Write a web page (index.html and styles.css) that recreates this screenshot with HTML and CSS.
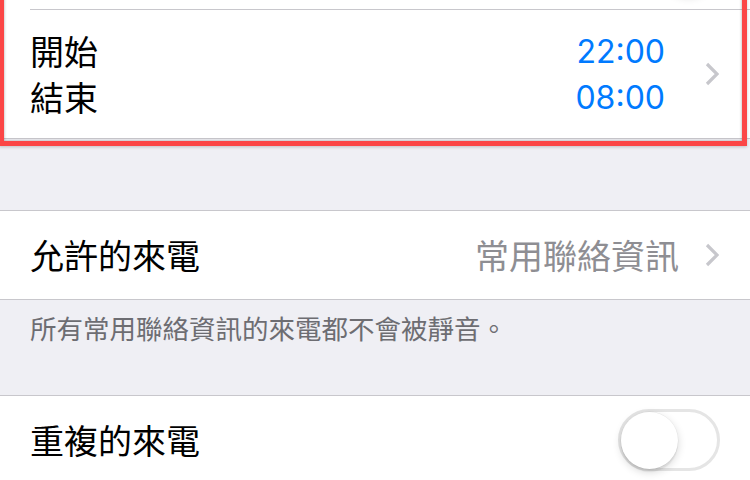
FILE: index.html
```html
<!DOCTYPE html>
<html lang="zh-Hant">
<head>
<meta charset="utf-8">
<title>勿擾模式</title>
<link rel="stylesheet" href="styles.css">
</head>
<body>
<div class="group group-top">
  <div class="prev-row">
    <div class="switch on"><div class="knob"></div></div>
  </div>
  <div class="time-row">
    <div class="labels">
      <div>開始</div>
      <div>結束</div>
    </div>
    <div class="times">
      <div>22:00</div>
      <div>08:00</div>
    </div>
    <svg class="chev" width="14" height="24" viewBox="0 0 14 24"><polyline points="2,2 12,12 2,22" fill="none" stroke="#c7c7cc" stroke-width="3.2"/></svg>
  </div>
</div>

<div class="group group-mid">
  <div class="row">
    <div class="label">允許的來電</div>
    <div class="value">常用聯絡資訊</div>
    <svg class="chev" width="14" height="24" viewBox="0 0 14 24"><polyline points="2,2 12,12 2,22" fill="none" stroke="#c7c7cc" stroke-width="3.2"/></svg>
  </div>
</div>
<div class="footer">所有常用聯絡資訊的來電都不會被靜音。</div>

<div class="group">
  <div class="row row-switch">
    <div class="label">重複的來電</div>
    <div class="switch"><div class="knob"></div></div>
  </div>
</div>

<div class="annot"></div>
</body>
</html>
```

FILE: styles.css
```css
html, body {
  margin: 0;
  padding: 0;
}
body {
  background: #efeff4;
  font-family: "Noto Sans CJK TC", sans-serif;
  color: #000;
  overflow: hidden;
}
.group {
  background: #fff;
  border-top: 1px solid #c8c7cc;
  border-bottom: 1px solid #c8c7cc;
}
.group-top {
  margin-top: -79px;
  border-top: none;
}
.group-mid {
  margin-top: 71px;
}
.prev-row {
  height: 88px;
  margin-left: 30px;
  padding-right: 30px;
  border-bottom: 1px solid #c8c7cc;
  display: flex;
  align-items: center;
  justify-content: flex-end;
}
.time-row {
  height: 128px;
  display: flex;
  align-items: center;
  padding: 0 31px 0 30px;
}
.labels {
  flex: 1;
  font-size: 34px;
  line-height: 46px;
}
.times {
  font-family: "Inter", "Liberation Sans", sans-serif;
  font-size: 32px;
  line-height: 46px;
  padding-top: 2px;
  color: #007aff;
  text-align: right;
  margin-right: 40px;
}
.chev {
  display: block;
  flex: none;
}
.row {
  height: 88px;
  display: flex;
  align-items: center;
  padding: 0 31px 0 30px;
}
.row-switch {
  padding-right: 30px;
}
.label {
  flex: 1;
  font-size: 34px;
  line-height: 46px;
}
.value {
  font-size: 34px;
  line-height: 46px;
  color: #8e8e93;
  margin-right: 26px;
}
.footer {
  height: 95px;
  box-sizing: border-box;
  padding: 12px 30px 0 30px;
  font-size: 26.5px;
  line-height: 32px;
  color: #6d6d72;
}
.switch {
  width: 102px;
  height: 62px;
  box-sizing: border-box;
  border: 3px solid #e5e5e5;
  border-radius: 31px;
  background: #fff;
  display: flex;
  align-items: center;
  flex: none;
}
.switch.on {
  background: #4cd964;
  border-color: #4cd964;
  justify-content: flex-end;
}
.knob {
  width: 57px;
  height: 57px;
  border-radius: 50%;
  background: #fff;
  box-shadow: 0 3px 8px rgba(0,0,0,0.16), 0 3px 1px rgba(0,0,0,0.06), 0 0 0 0.5px rgba(0,0,0,0.06);
}
.annot {
  position: absolute;
  left: -1px;
  top: -30px;
  width: 748px;
  height: 176px;
  box-sizing: border-box;
  border: 5px solid #fb4646;
  box-shadow: inset 0 0 3px rgba(0,0,0,0.35), 0 1px 3px rgba(0,0,0,0.2);
  pointer-events: none;
}
```
